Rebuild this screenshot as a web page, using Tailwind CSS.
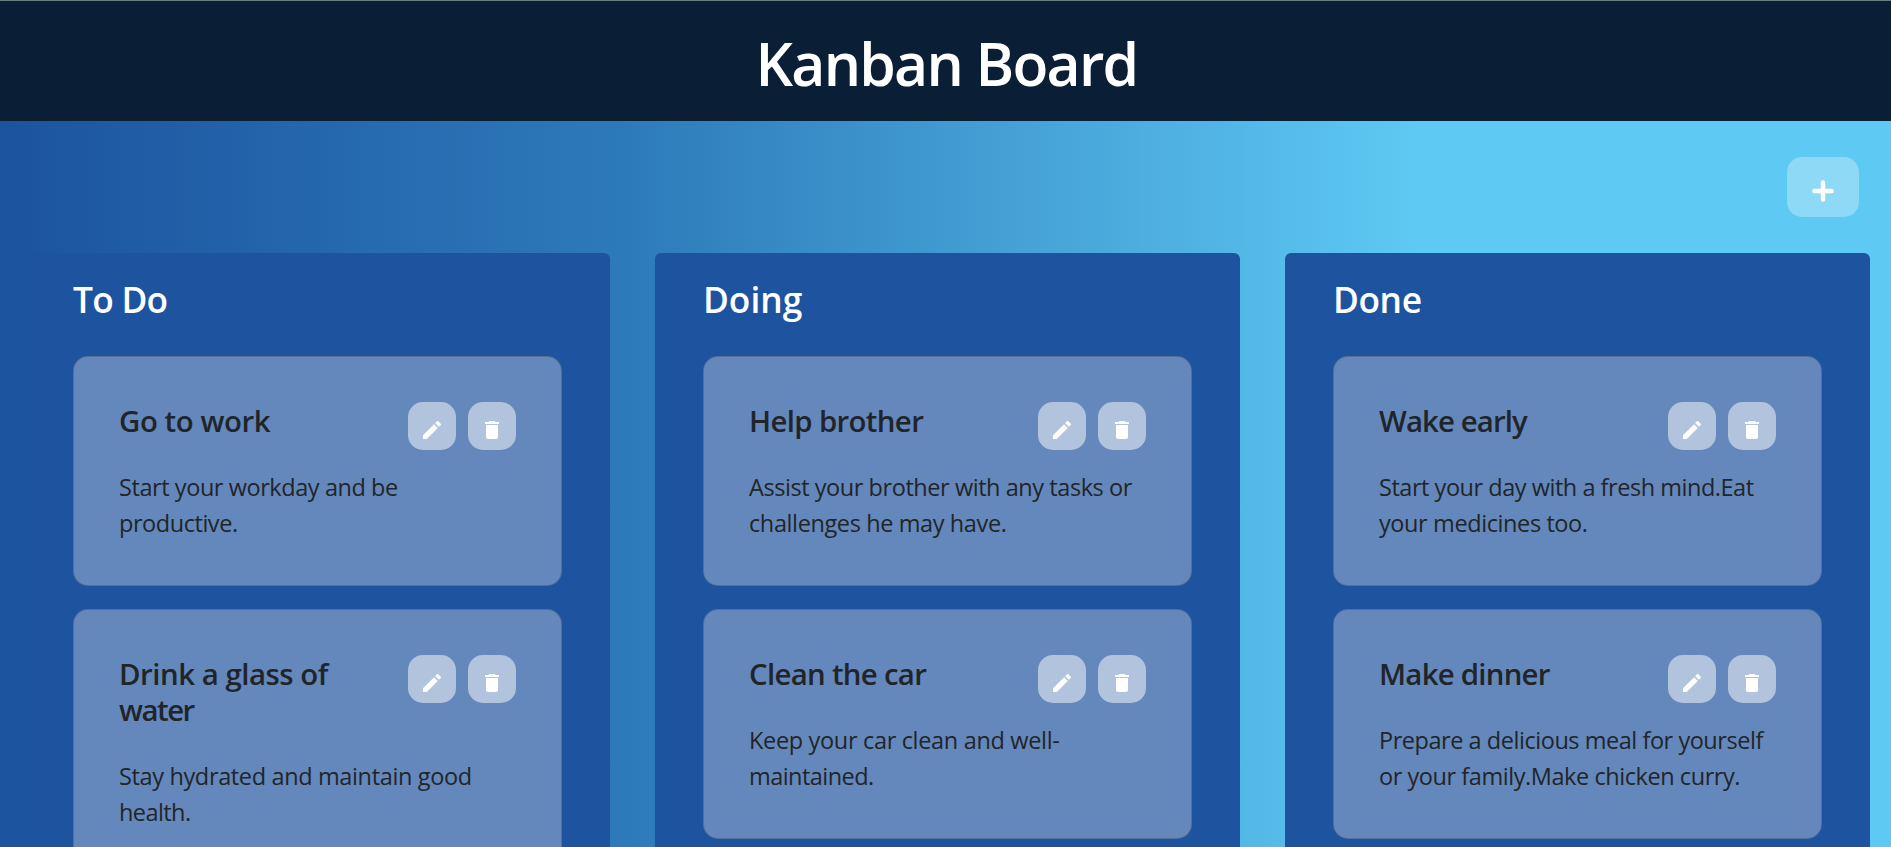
<!DOCTYPE html>
<html lang="en">
<head>
<meta charset="utf-8">
<title>Kanban Board</title>
<script src="https://cdn.jsdelivr.net/npm/@tailwindcss/browser@4"></script>
</head>
<body class="h-[847px] overflow-hidden font-['Open_Sans','Noto_Sans',sans-serif] text-[#212529]">
<div class="flex h-[847px] flex-col overflow-hidden">
  <header class="flex h-[121px] shrink-0 items-center justify-center border-t border-[#6c7f80] bg-[#0a1f36] pt-1 pl-[2px]">
    <h1 class="text-[58.8px] leading-[72px] font-semibold tracking-[-1.77px] text-white">Kanban Board</h1>
  </header>
  <main class="min-h-0 grow bg-[linear-gradient(90deg,#1c539f_0%,#2d7aba_33%,#5ec9f3_75%,#5ec9f3_100%)]">
    <div class="flex justify-end pt-9 pr-8 pb-9">
      <button class="flex h-[60px] w-[72px] items-center justify-center rounded-[15px] bg-white/30 pt-2" aria-label="Add">
        <svg class="size-6" viewBox="0 0 24 24" fill="none" stroke="#fff" stroke-width="4.4" stroke-linecap="round"><path d="M12 3.4v17.2M3.4 12h17.2"/></svg>
      </button>
    </div>
    <div id="board" class="grid grid-cols-3 gap-[45px] pr-[21px] pl-[25px]"></div>
  </main>
</div>
<script>
// Each line of text is [content, letter spacing in px].
const columns = [
  { title: ['To Do', -0.74], cards: [
    { title: [['Go to work', -0.45]], body: [['Start your workday and be', -0.43], ['productive.', -0.45]] },
    { title: [['Drink a glass of', -0.48], ['water', -1.5]], body: [['Stay hydrated and maintain good', -0.36], ['health.', -0.57]] } ] },
  { title: ['Doing', 0], cards: [
    { title: [['Help brother', -0.65]], body: [['Assist your brother with any tasks or', -0.44], ['challenges he may have.', -0.39]] },
    { title: [['Clean the car', -0.7]], body: [['Keep your car clean and well-', -0.33], ['maintained.', -0.55]] } ] },
  { title: ['Done', -0.4], cards: [
    { title: [['Wake early', -0.9]], body: [['Start your day with a fresh mind.Eat', -0.47], ['your medicines too.', -0.4]] },
    { title: [['Make dinner', -0.75]], body: [['Prepare a delicious meal for yourself', -0.46], ['or your family.Make chicken curry.', -0.44]] } ] },
];
const icons = {
  Edit: 'M3 17.25V21h3.75L17.81 9.94l-3.75-3.75L3 17.25zM20.71 7.04a.996.996 0 0 0 0-1.41l-2.34-2.34a.996.996 0 0 0-1.41 0l-1.83 1.83 3.75 3.75 1.83-1.83z',
  Delete: 'M6 19c0 1.1.9 2 2 2h8c1.1 0 2-.9 2-2V7H6v12zM19 4h-3.5l-1-1h-5l-1 1H5v2h14V4z',
};
const lines = ls => ls.map(([t, s]) => `<span class="block whitespace-nowrap" style="letter-spacing:${s}px">${t}</span>`).join('');
const button = name => `<button class="flex size-12 items-center justify-center rounded-[15px] bg-white/50 pt-2" aria-label="${name}"><svg class="size-6" viewBox="0 0 24 24" fill="#fff"><path d="${icons[name]}"/></svg></button>`;
const card = c => `<article class="rounded-[15px] border border-black/[.175] bg-[#6488bb] px-[45px] pt-[45px] pb-11">
  <div class="flex items-start justify-between">
    <h3 class="mb-[30px] pt-px text-[29.4px] leading-9 font-semibold">${lines(c.title)}</h3>
    <div class="flex gap-3">${button('Edit')}${button('Delete')}</div>
  </div>
  <p class="text-[23.5px] leading-9">${lines(c.body)}</p>
</article>`;
document.getElementById('board').innerHTML = columns.map(col => `<section class="h-[700px] rounded-md bg-[#1e539f] px-12 pt-[25px]">
  <h2 class="mb-[35px] text-[35.3px] leading-[43px] font-semibold text-white">${lines([col.title])}</h2>
  <div class="flex flex-col gap-[23px]">${col.cards.map(card).join('')}</div>
</section>`).join('');
</script>
</body>
</html>
